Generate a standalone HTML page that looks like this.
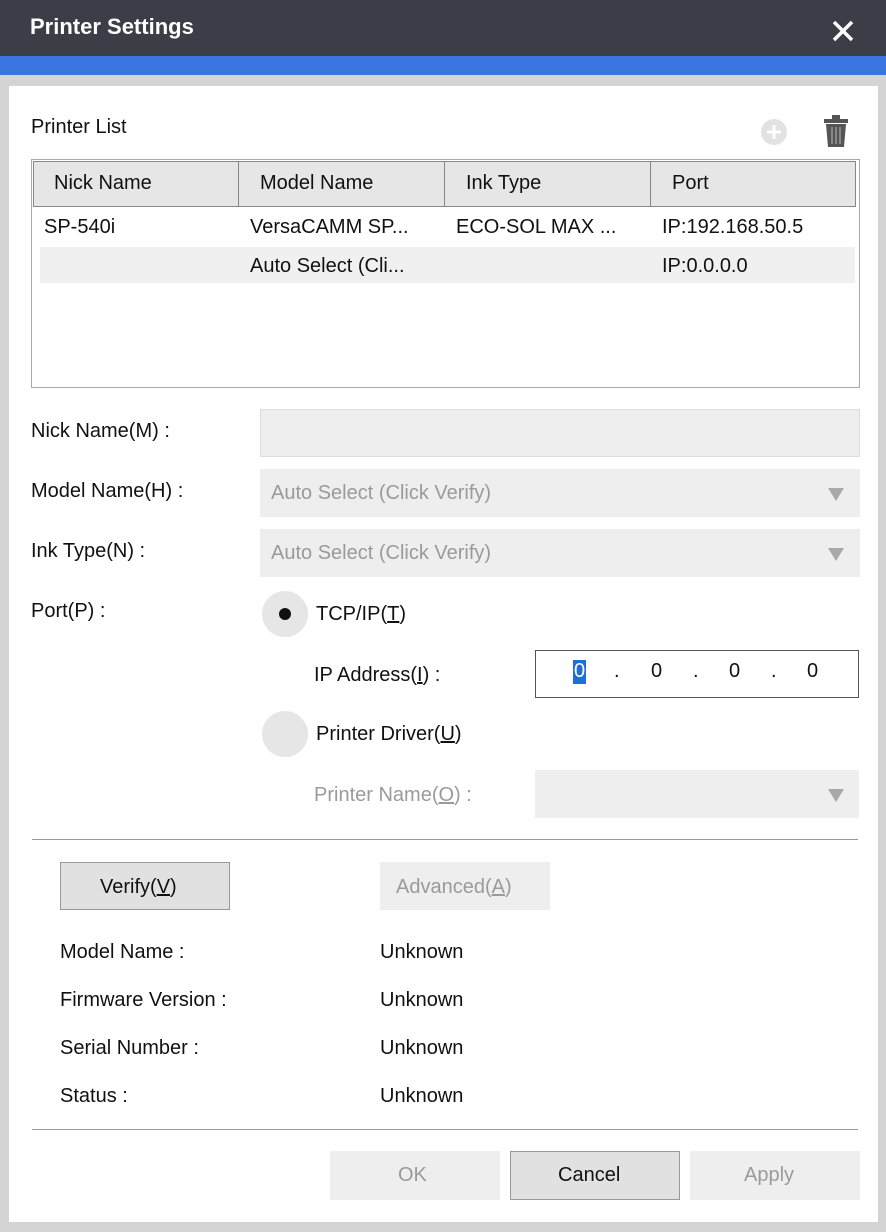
<!DOCTYPE html>
<html><head><style>
*{margin:0;padding:0;box-sizing:border-box}
body{width:886px;height:1232px;background:#d4d4d4;font-family:"Liberation Sans",sans-serif;font-size:20px;color:#111;position:relative;overflow:hidden}
.a{position:absolute;white-space:nowrap}
.title{left:0;top:0;width:886px;height:56px;background:#3b3e46}
.blue{left:0;top:56px;width:886px;height:19px;background:#3a74df}
.panel{left:9px;top:86px;width:869px;height:1136px;background:#fff}
.g{color:#9a9a9a}
.box{background:#eeeeee}
.tri{width:0;height:0;border-left:8px solid transparent;border-right:8px solid transparent;border-top:13px solid #a8a8a8}
u{text-decoration:underline}
</style></head><body>
<div class="a title"></div>
<div class="a" style="left:30px;top:14px;color:#fff;font-size:22px;font-weight:bold">Printer Settings</div>
<svg class="a" style="left:832px;top:20px" width="22" height="22"><path d="M2 2L20 20M20 2L2 20" stroke="#fff" stroke-width="3.5"/></svg>
<div class="a blue"></div>
<div class="a panel"></div>
<div class="a" style="left:31px;top:116px">Printer List</div>
<svg class="a" style="left:760px;top:118px" width="30" height="30"><circle cx="14" cy="14" r="13" fill="#e2e2e2"/><path d="M14 7v14M7 14h14" stroke="#fff" stroke-width="3"/></svg>
<svg class="a" style="left:822px;top:114px" width="28" height="34"><rect x="2" y="5" width="24" height="4" fill="#555"/><rect x="10" y="1" width="8" height="5" fill="#555"/><path d="M4 10h20l-2 23H6z" fill="#555"/><path d="M10 13v17M14 13v17M18 13v17" stroke="#999" stroke-width="1.5"/></svg>
<div class="a" style="left:31px;top:159px;width:829px;height:229px;border:1px solid #aaa;background:#fff"></div>
<div class="a" style="left:33px;top:161px;width:823px;height:46px;background:#e6e6e6;border:1px solid #888"></div>
<div class="a" style="left:238px;top:162px;width:1px;height:45px;background:#888"></div>
<div class="a" style="left:444px;top:162px;width:1px;height:45px;background:#888"></div>
<div class="a" style="left:650px;top:162px;width:1px;height:45px;background:#888"></div>
<div class="a" style="left:54px;top:172px">Nick Name</div>
<div class="a" style="left:260px;top:172px">Model Name</div>
<div class="a" style="left:466px;top:172px">Ink Type</div>
<div class="a" style="left:672px;top:172px">Port</div>
<div class="a" style="left:44px;top:216px">SP-540i</div>
<div class="a" style="left:250px;top:216px">VersaCAMM SP...</div>
<div class="a" style="left:456px;top:216px">ECO-SOL MAX ...</div>
<div class="a" style="left:662px;top:216px">IP:192.168.50.5</div>
<div class="a" style="left:40px;top:247px;width:815px;height:36px;background:#f0f0f0"></div>
<div class="a" style="left:250px;top:255px">Auto Select (Cli...</div>
<div class="a" style="left:662px;top:255px">IP:0.0.0.0</div>

<div class="a" style="left:31px;top:420px">Nick Name(M) :</div>
<div class="a box" style="left:260px;top:409px;width:600px;height:48px;border:1px solid #ddd"></div>
<div class="a" style="left:31px;top:480px">Model Name(H) :</div>
<div class="a box" style="left:260px;top:469px;width:600px;height:48px"></div>
<div class="a g" style="left:271px;top:482px">Auto Select (Click Verify)</div>
<div class="a tri" style="left:828px;top:488px"></div>
<div class="a" style="left:31px;top:540px">Ink Type(N) :</div>
<div class="a box" style="left:260px;top:529px;width:600px;height:48px"></div>
<div class="a g" style="left:271px;top:542px">Auto Select (Click Verify)</div>
<div class="a tri" style="left:828px;top:548px"></div>
<div class="a" style="left:31px;top:600px">Port(P) :</div>
<div class="a" style="left:262px;top:591px;width:46px;height:46px;border-radius:50%;background:#e6e6e6"></div>
<div class="a" style="left:279px;top:608px;width:12px;height:12px;border-radius:50%;background:#111"></div>
<div class="a" style="left:316px;top:603px">TCP/IP(<u>T</u>)</div>
<div class="a" style="left:314px;top:664px">IP Address(<u>I</u>) :</div>
<div class="a" style="left:535px;top:650px;width:324px;height:48px;border:1.5px solid #555;background:#fff"></div>
<div class="a" style="left:573px;top:660px;width:13px;height:24px;background:#1f6fd6"></div>
<div class="a" style="left:574px;top:660px;color:#fff">0</div>
<div class="a" style="left:614px;top:660px">.</div>
<div class="a" style="left:651px;top:660px">0</div>
<div class="a" style="left:693px;top:660px">.</div>
<div class="a" style="left:729px;top:660px">0</div>
<div class="a" style="left:771px;top:660px">.</div>
<div class="a" style="left:807px;top:660px">0</div>
<div class="a" style="left:262px;top:711px;width:46px;height:46px;border-radius:50%;background:#e6e6e6"></div>
<div class="a" style="left:316px;top:723px">Printer Driver(<u>U</u>)</div>
<div class="a g" style="left:314px;top:784px">Printer Name(<u>O</u>) :</div>
<div class="a box" style="left:535px;top:770px;width:324px;height:48px"></div>
<div class="a tri" style="left:828px;top:789px"></div>
<div class="a" style="left:32px;top:839px;width:826px;height:1px;background:#999"></div>
<div class="a" style="left:60px;top:862px;width:170px;height:48px;background:#e1e1e1;border:1px solid #999"></div>
<div class="a" style="left:100px;top:876px">Verify(<u>V</u>)</div>
<div class="a" style="left:380px;top:862px;width:170px;height:48px;background:#eeeeee"></div>
<div class="a g" style="left:396px;top:876px">Advanced(<u>A</u>)</div>
<div class="a" style="left:60px;top:941px">Model Name :</div>
<div class="a" style="left:60px;top:989px">Firmware Version :</div>
<div class="a" style="left:60px;top:1037px">Serial Number :</div>
<div class="a" style="left:60px;top:1085px">Status :</div>
<div class="a" style="left:380px;top:941px">Unknown</div>
<div class="a" style="left:380px;top:989px">Unknown</div>
<div class="a" style="left:380px;top:1037px">Unknown</div>
<div class="a" style="left:380px;top:1085px">Unknown</div>
<div class="a" style="left:32px;top:1129px;width:826px;height:1px;background:#999"></div>
<div class="a" style="left:330px;top:1151px;width:170px;height:49px;background:#eeeeee"></div>
<div class="a g" style="left:398px;top:1164px">OK</div>
<div class="a" style="left:510px;top:1151px;width:170px;height:49px;background:#e1e1e1;border:1px solid #999"></div>
<div class="a" style="left:558px;top:1164px">Cancel</div>
<div class="a" style="left:690px;top:1151px;width:170px;height:49px;background:#eeeeee"></div>
<div class="a g" style="left:744px;top:1164px">Apply</div>
</body></html>
